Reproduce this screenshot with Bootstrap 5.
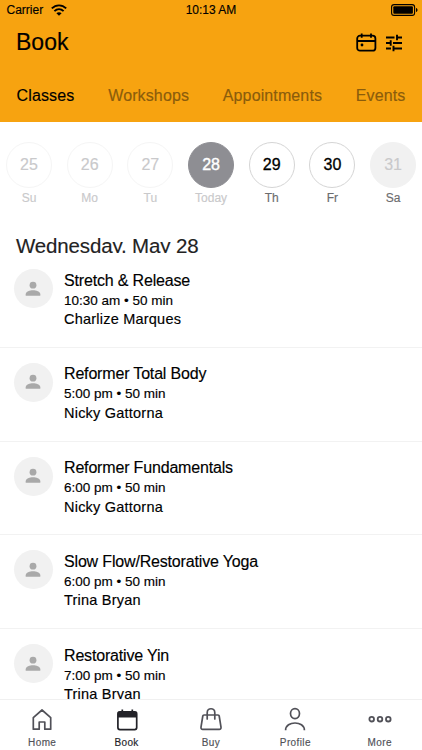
<!DOCTYPE html>
<html lang="en">
<head>
<meta charset="utf-8">
<meta name="viewport" content="width=device-width, initial-scale=1">
<title>Book</title>
<link href="https://cdn.jsdelivr.net/npm/bootstrap@5.3.0/dist/css/bootstrap.min.css" rel="stylesheet">
<style>
body{font-family:"Liberation Sans",Arial,sans-serif;color:#000;background:#fff;height:750px;overflow:hidden;-webkit-text-stroke:.15px}
svg{display:block;flex:none}
.app-header{background:#f7a310;height:122px;flex:none}
.status-bar{height:20px;font-size:12px;line-height:20px;padding:0 4px 0 6.5px;display:grid;grid-template-columns:1fr auto 1fr}
.clock{margin-left:-2.5px}
.title-bar{height:45px;padding:0 19px 0 16px}
.page-title{font-size:23px;line-height:45px;font-weight:400;letter-spacing:0}
.tabs a{color:#8a5c0c;font-size:16px;line-height:24px;letter-spacing:.12px;text-decoration:none}
.tabs a.active{color:#000;letter-spacing:.15px}
.tabs{padding:19px 16.5px 0 16.5px}
.day-strip{padding:20px 0 0 6px;gap:14.7px;height:109px;flex:none}
.day{width:46px;text-align:center;color:#c9c9cb;font-size:12px;line-height:18px}
.day-num{width:46px;height:46px;border:1px solid #f5f5f5;border-radius:50%;font-size:16px;margin-bottom:1px}
.day.today .day-num{background:#8e8e93;border-color:#8e8e93;color:#fff;-webkit-text-stroke:.4px}
.day.open{color:#6c6c6e}
.day.open .day-num{border-color:#d5d5d5;color:#000;-webkit-text-stroke:.3px}
.day.full{color:#6c6c6e}
.day.full .day-num{background:#f1f1f1;border-color:#f1f1f1;color:#c9c9cb}
.date-heading{font-size:20.5px;line-height:24px;padding:3px 16px 0;height:22px;margin-bottom:1px;overflow:hidden;color:#222;flex:none;letter-spacing:-.15px}
.class-row{height:93.75px;padding:15px 13.5px 0;gap:11.5px;border-bottom:1px solid #f2f2f2;flex:none}
.avatar{width:39px;height:39px;background:#f1f1f1;flex:none}
.class-name{font-size:16px;line-height:22px;margin-top:.5px;letter-spacing:-.17px}
.class-time{font-size:13.5px;line-height:18px}
.class-staff{font-size:14.5px;line-height:19px;letter-spacing:.22px;margin-top:.5px}
.tab-bar{height:51px;flex:none;border-top:1px solid #f0f0f0;background:#fff}
.tab-bar a{width:84.4px;color:#515158;font-size:10px;line-height:12px;letter-spacing:.38px;text-decoration:none;padding-top:7px}
.tab-bar a.active{color:#222228}
.tab-bar svg{margin-bottom:5px}
</style>
<script src="https://cdn.jsdelivr.net/npm/bootstrap@5.3.0/dist/js/bootstrap.bundle.min.js"></script>
</head>
<body class="d-flex flex-column m-0">
<svg width="0" height="0" class="position-absolute"><symbol id="person" viewBox="0 0 16 16"><circle cx="8" cy="4.2" r="3.4"/><path d="M.7 14.8v-1.6C.7 10.6 4.8 9.2 8 9.2s7.3 1.400 7.300 4v1.600z"/></symbol></svg>
<header class="app-header">
  <div class="status-bar">
    <div class="d-flex align-items-center"><span>Carrier</span>
      <svg class="ms-2" width="16" height="12" viewBox="0 0 16 12" fill="none" stroke="#000" stroke-width="1.9"><path d="M.8 4.400C5 .3 11 .3 15.200 4.400M3.400 7.100c2.700-2.600 6.500-2.600 9.200 0"/><path d="M8 11.800 5.400 9.200c1.500-1.400 3.700-1.400 5.200 0z" fill="#000" stroke="none"/></svg>
    </div>
    <span class="clock">10:13 AM</span>
    <div class="d-flex align-items-center justify-content-end">
      <svg width="27" height="12" viewBox="0 0 27 12"><rect x=".6" y=".6" width="23" height="10.800" rx="2.500" fill="none" stroke="#000" stroke-width="1.100"/><rect x="2.300" y="2.300" width="19.600" height="7.400" rx="1" fill="#000"/><path d="M25 4c2 .6 2 3.400 0 4z"/></svg>
    </div>
  </div>
  <div class="title-bar d-flex align-items-center justify-content-between">
    <h1 class="page-title m-0">Book</h1>
    <div class="d-flex align-items-center">
      <svg width="21" height="19" viewBox="0 0 21 19" fill="none" stroke="#000" stroke-width="1.800"><rect x="1.200" y="2.700" width="18.200" height="15" rx="2.800"/><path d="M1.200 8h18.200M5.700.5v4.300M15 .5v4.300"/><circle cx="6" cy="12" r="1.400" fill="#000" stroke="none"/></svg>
      <svg class="ms-2" width="18" height="18" viewBox="0 0 18 18" fill="none" stroke="#000" stroke-width="1.900"><path d="M1 3.500h8.500M12 3.500h5M12 .800v5.400M1 9h4.500M8 9h9M5.700 6.300v5.400M1 14.500h5M8.500 14.500H17M8.500 11.800v5.400"/></svg>
    </div>
  </div>
  <nav class="tabs d-flex justify-content-between"><a href="#" class="active">Classes</a><a href="#">Workshops</a><a href="#">Appointments</a><a href="#">Events</a></nav>
</header>
<section class="day-strip d-flex">
  <div class="day"><div class="day-num d-flex align-items-center justify-content-center">25</div><span>Su</span></div>
  <div class="day"><div class="day-num d-flex align-items-center justify-content-center">26</div><span>Mo</span></div>
  <div class="day"><div class="day-num d-flex align-items-center justify-content-center">27</div><span>Tu</span></div>
  <div class="day today"><div class="day-num d-flex align-items-center justify-content-center">28</div><span>Today</span></div>
  <div class="day open"><div class="day-num d-flex align-items-center justify-content-center">29</div><span>Th</span></div>
  <div class="day open"><div class="day-num d-flex align-items-center justify-content-center">30</div><span>Fr</span></div>
  <div class="day full"><div class="day-num d-flex align-items-center justify-content-center">31</div><span>Sa</span></div>
</section>
<main class="flex-grow-1 overflow-hidden d-flex flex-column">
  <h2 class="date-heading fw-normal mt-0 mx-0">Wednesday, May 28</h2>
  <div class="class-row d-flex"><div class="avatar rounded-circle d-flex align-items-center justify-content-center"><svg width="16" height="16" fill="#a9a9a9"><use href="#person"/></svg></div><div><div class="class-name">Stretch &amp; Release</div><div class="class-time">10:30 am • 50 min</div><div class="class-staff">Charlize Marques</div></div></div>
  <div class="class-row d-flex"><div class="avatar rounded-circle d-flex align-items-center justify-content-center"><svg width="16" height="16" fill="#a9a9a9"><use href="#person"/></svg></div><div><div class="class-name">Reformer Total Body</div><div class="class-time">5:00 pm • 50 min</div><div class="class-staff">Nicky Gattorna</div></div></div>
  <div class="class-row d-flex"><div class="avatar rounded-circle d-flex align-items-center justify-content-center"><svg width="16" height="16" fill="#a9a9a9"><use href="#person"/></svg></div><div><div class="class-name">Reformer Fundamentals</div><div class="class-time">6:00 pm • 50 min</div><div class="class-staff">Nicky Gattorna</div></div></div>
  <div class="class-row d-flex"><div class="avatar rounded-circle d-flex align-items-center justify-content-center"><svg width="16" height="16" fill="#a9a9a9"><use href="#person"/></svg></div><div><div class="class-name">Slow Flow/Restorative Yoga</div><div class="class-time">6:00 pm • 50 min</div><div class="class-staff">Trina Bryan</div></div></div>
  <div class="class-row d-flex"><div class="avatar rounded-circle d-flex align-items-center justify-content-center"><svg width="16" height="16" fill="#a9a9a9"><use href="#person"/></svg></div><div><div class="class-name">Restorative Yin</div><div class="class-time">7:00 pm • 50 min</div><div class="class-staff">Trina Bryan</div></div></div>
</main>
<nav class="tab-bar d-flex">
  <a href="#" class="d-flex flex-column align-items-center"><svg width="24" height="25" viewBox="0 0 24 25" fill="none" stroke="currentColor" stroke-width="1.700" stroke-linejoin="round"><path d="M3.300 10.600 12 3l8.700 7.600v11.600h-5.900V15H9.200v7.200H3.300z"/></svg>Home</a>
  <a href="#" class="active d-flex flex-column align-items-center"><svg width="24" height="25" viewBox="0 0 24 25" fill="none" stroke="currentColor" stroke-width="1.700"><rect x="2.900" y="4.900" width="18.800" height="17.700" rx="2"/><path d="M3 4.800h18.600v5.700H3z" fill="currentColor" stroke="none"/><path d="M7.300 2.500v3M17.300 2.500v3"/></svg>Book</a>
  <a href="#" class="d-flex flex-column align-items-center"><svg width="24" height="25" viewBox="0 0 24 25" fill="none" stroke="currentColor" stroke-width="1.700" stroke-linecap="round" stroke-linejoin="round"><path d="M5 8h14c.7 0 1.100.4 1.200 1l1.800 11.200c.2 1.200-.5 2.200-1.700 2.200H3.700c-1.200 0-1.900-1-1.700-2.200L3.800 9c.1-.6.5-1 1.200-1zM8.200 12V5.700c0-5.300 7.600-5.300 7.600 0V12"/></svg>Buy</a>
  <a href="#" class="d-flex flex-column align-items-center"><svg width="24" height="25" viewBox="0 0 24 25" fill="none" stroke="currentColor" stroke-width="1.700"><ellipse cx="12" cy="6.600" rx="4.500" ry="5"/><path d="M2.600 23.200c0-9.600 18.800-9.600 18.800 0"/></svg>Profile</a>
  <a href="#" class="d-flex flex-column align-items-center"><svg width="24" height="25" viewBox="0 0 24 25" fill="none" stroke="currentColor" stroke-width="1.800"><circle cx="3.700" cy="12.200" r="2.300"/><circle cx="12" cy="12.200" r="2.300"/><circle cx="20.300" cy="12.200" r="2.300"/></svg>More</a>
</nav>
</body>
</html>
